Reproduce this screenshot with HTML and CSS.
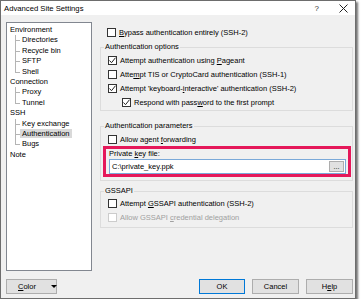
FILE: index.html
```html
<!DOCTYPE html>
<html>
<head>
	<title>Advanced Site Settings</title>
	<meta http-equiv="Content-Type" content="text/html;charset=utf-8" />
	<link rel="stylesheet" href="styles.css">
</head>
<body>

<div class="window">
	<div class="titlebar">
		<span class="title">Advanced Site Settings</span>
		<span class="help">?</span>
		<svg class="close" width="9" height="9" viewBox="0 0 9 9"><path d="M0.5 0.5L8.5 8.5M8.5 0.5L0.5 8.5" stroke="#222" stroke-width="1" fill="none"/></svg>
	</div>

	<div class="body">
		<div class="main">
			<ul class="tree">
				<li>Environment
					<ul>
						<li>Directories</li>
						<li>Recycle bin</li>
						<li>SFTP</li>
						<li>Shell</li>
					</ul>
				</li>
				<li>Connection
					<ul>
						<li>Proxy</li>
						<li>Tunnel</li>
					</ul>
				</li>
				<li>SSH
					<ul>
						<li>Key exchange</li>
						<li><span class="selected">Authentication</span></li>
						<li>Bugs</li>
					</ul>
				</li>
				<li>Note</li>
			</ul>

			<div class="panel">
				<div class="row top-row"><span class="box"></span><span><u>B</u>ypass authentication entirely (SSH-2)</span></div>

				<fieldset class="group group-options">
					<legend>Authentication options</legend>
					<div class="row"><span class="box"><svg width="9" height="9" viewBox="0 0 9 9"><path d="M1.5 4.5L3.5 6.7L7.5 1.7" stroke="#222" stroke-width="1" fill="none"/></svg></span><span>Attempt authentication using <u>P</u>ageant</span></div>
					<div class="row"><span class="box"></span><span>Atte<u>m</u>pt TIS or CryptoCard authentication (SSH-1)</span></div>
					<div class="row"><span class="box"><svg width="9" height="9" viewBox="0 0 9 9"><path d="M1.5 4.5L3.5 6.7L7.5 1.7" stroke="#222" stroke-width="1" fill="none"/></svg></span><span>Attempt 'keyboard-<u>i</u>nteractive' authentication (SSH-2)</span></div>
					<div class="row sub"><span class="box"><svg width="9" height="9" viewBox="0 0 9 9"><path d="M1.5 4.5L3.5 6.7L7.5 1.7" stroke="#222" stroke-width="1" fill="none"/></svg></span><span>Respond with pass<u>w</u>ord to the first prompt</span></div>
				</fieldset>

				<fieldset class="group group-params">
					<legend>Authentication parameters</legend>
					<div class="row"><span class="box"></span><span>Allow agent <u>f</u>orwarding</span></div>
					<div class="highlight">
						<div class="field-label">Private <u>k</u>ey file:</div>
						<div class="file-input">
							<span class="file-path">C:\private_key.ppk</span>
							<span class="browse">...</span>
						</div>
					</div>
				</fieldset>

				<fieldset class="group group-gss">
					<legend>GSSAPI</legend>
					<div class="row"><span class="box"></span><span>Attempt <u>G</u>SSAPI authentication (SSH-2)</span></div>
					<div class="row disabled"><span class="box"></span><span>Allow GSSAPI <u>c</u>redential delegation</span></div>
				</fieldset>
			</div>
		</div>

		<div class="footer">
			<div class="btn btn-color"><span><u>C</u>olor</span><span class="arrow"></span></div>
			<div class="spacer"></div>
			<div class="btn btn-default">OK</div>
			<div class="btn">Cancel</div>
			<div class="btn">H<u>e</u>lp</div>
		</div>
	</div>
</div>

</body>
</html>
```

FILE: styles.css
```css
html { height:100%; }
body { margin:0; padding:0; background:#ffffff; font-family:"Liberation Sans", Arial, sans-serif; font-size:7.5px; color:#000000; }

.window {
	width:356px;
	height:299px;
	box-sizing:border-box;
	border:1px solid #6d6d6d;
	background:#f0f0f0;
	box-shadow:2px 2px 2px rgba(0,0,0,0.55);
	display:flex;
	flex-direction:column;
}

.titlebar {
	height:14px;
	background:#ffffff;
	display:flex;
	align-items:center;
	padding:0 7px 0 3px;
}
.title { font-size:7.7px; flex:1; }
.help { font-size:8px; color:#333; margin-right:20px; }
.close { display:block; }

.body {
	flex:1;
	display:flex;
	flex-direction:column;
	padding:7px 2px 4px 5px;
}

.main { display:flex; gap:8px; height:249px; }

/* tree */
.tree {
	list-style:none;
	margin:0;
	padding:2px 0 0 3px;
	width:86px;
	box-sizing:border-box;
	background:#ffffff;
	border:1px solid #828790;
	line-height:10.4px;
}
.tree ul { list-style:none; margin:0; padding:0 0 0 12px; }
.tree ul li { position:relative; }
.tree ul li::before {
	content:"";
	position:absolute;
	left:-7px;
	top:5px;
	width:5px;
	border-top:1px solid #b4b4b4;
}
.tree ul li::after {
	content:"";
	position:absolute;
	left:-7px;
	top:0;
	height:100%;
	border-left:1px solid #b4b4b4;
}
.tree ul li:last-child::after { height:5px; }
.selected { background:#d9d9d9; margin-left:-2px; padding:0 2px; }

/* right panel */
.panel { flex:1; display:flex; flex-direction:column; }

.row { display:flex; align-items:center; height:14px; padding-left:7px; }
.top-row { margin-top:3px; padding-left:7px; }
.row.sub { padding-left:21px; }
.box {
	width:9px;
	height:9px;
	box-sizing:border-box;
	border:1px solid #333333;
	background:#ffffff;
	margin-right:3px;
	position:relative;
}
.box svg { position:absolute; left:-1px; top:-1px; }
.disabled { color:#a0a0a0; }
.disabled .box { border-color:#cccccc; }

.group {
	margin:0;
	padding:0 0 1px 0;
	border:1px solid #dcdcdc;
	min-width:0;
}
.group legend { padding:0 1px; margin-left:3px; line-height:10px; }
.group-options { margin-top:3px; padding-top:1px; }
.group-params { margin-top:10px; padding-bottom:3px; }
.group-gss { margin-top:5px; padding-bottom:3px; }
.group-params .row { margin-top:1px; }

.highlight {
	margin:0 1px 0 2px;
	border:3px solid #e5185a;
	padding:0 2px 0 3px;
}
.field-label { line-height:10px; }
.file-input {
	height:15px;
	box-sizing:border-box;
	border:1px solid #7aa9d9;
	background:#ffffff;
	display:flex;
	align-items:center;
	padding:0 1px 0 2px;
}
.file-path { flex:1; }
.browse {
	width:15px;
	height:11px;
	box-sizing:border-box;
	background:#e1e1e1;
	border:1px solid #adadad;
	display:flex;
	align-items:flex-end;
	justify-content:center;
	line-height:8px;
	font-size:7px;
}

/* footer */
.footer { display:flex; gap:7px; margin-top:8px; }
.spacer { flex:1; }
.btn {
	width:47px;
	height:15px;
	box-sizing:border-box;
	background:#e1e1e1;
	border:1px solid #adadad;
	display:flex;
	align-items:center;
	justify-content:center;
}
.btn-default { border-color:#0078d7; width:46px; }
.btn-color { width:51px; justify-content:flex-start; padding-left:11px; }
.btn-color .arrow {
	margin-left:15px;
	width:0;
	height:0;
	border-left:3px solid transparent;
	border-right:3px solid transparent;
	border-top:3px solid #000000;
}
```
